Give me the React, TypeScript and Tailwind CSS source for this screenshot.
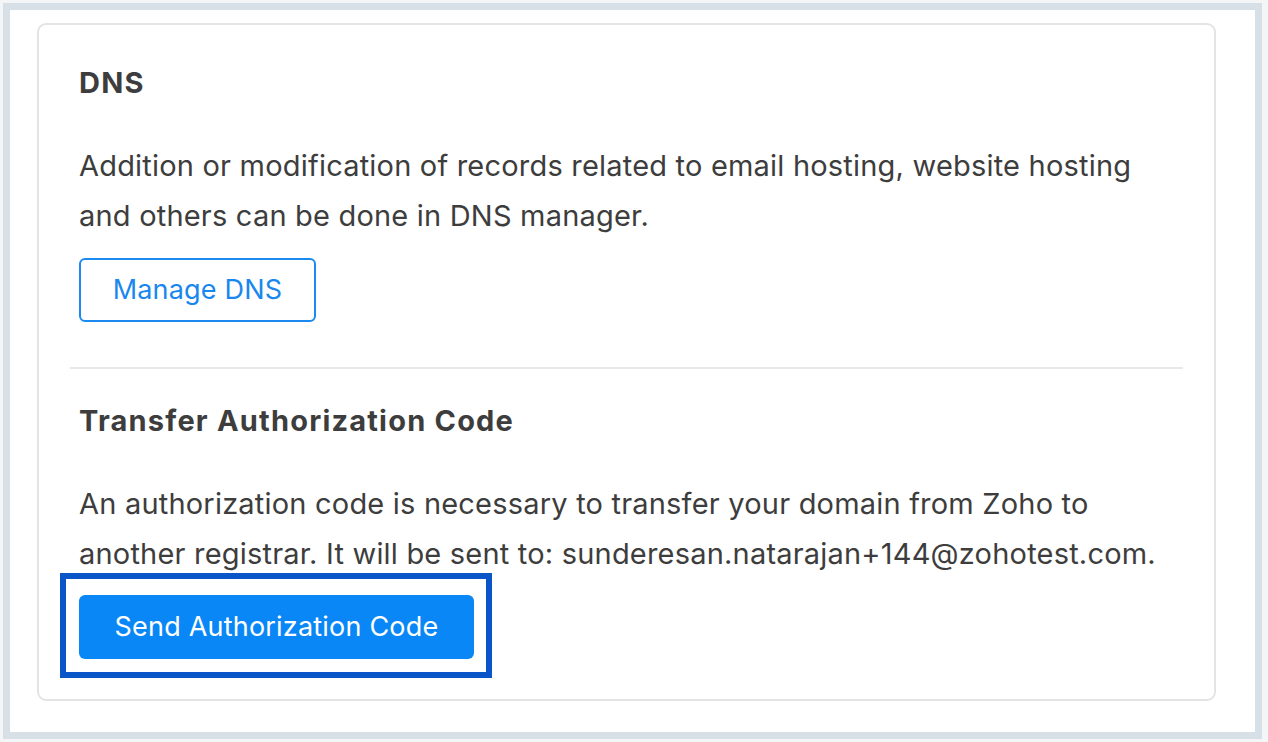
export default function App() {
  return (
    <div
      className="h-[742px] w-[1268px] bg-[#f3f5f7] p-[3px]"
      style={{ fontFamily: 'Inter, "Open Sans", sans-serif' }}
    >
      <div className="flex h-full w-[1259px] flex-col border-[7px] border-[#d7dfe7] bg-white pl-[27px] pt-[13px]">
        <div className="flex h-[678px] w-[1179px] flex-col rounded-[9px] border-2 border-[#e4e4e4] px-[40px] text-[#3d3d3d]">
          <h2 className="mt-[38px] text-[29px] font-bold leading-[40px] tracking-[1.2px]">DNS</h2>
          <p className="mt-[38px] text-[29px] leading-[50px] tracking-[0.2px]">
            Addition or modification of records related to email hosting, website hosting
            <br />
            and others can be done in DNS manager.
          </p>
          <div className="mt-[17px]">
            <button className="h-[64px] w-[237px] rounded-[6px] border-2 border-[#1a8af0] text-[27px] tracking-[0.2px] text-[#1a87ee]">
              Manage DNS
            </button>
          </div>
          <div className="-mx-[9px] mt-[45px] h-[2px] bg-[#e8e8e8]" />
          <h2 className="mt-[32px] text-[29px] font-bold leading-[40px] tracking-[1.2px]">Transfer Authorization Code</h2>
          <p className="mt-[38px] text-[29px] leading-[50px] tracking-[0.2px]">
            An authorization code is necessary to transfer your domain from Zoho to
            <br />
            another registrar. It will be sent to: sunderesan.natarajan+144@zohotest.com.
          </p>
          <div className="relative mt-[16px] self-start">
            <button className="h-[64px] w-[395px] rounded-[6px] bg-[#0a87f6] text-[27px] tracking-[0.2px] text-white">
              Send Authorization Code
            </button>
            <div className="pointer-events-none absolute -top-[22px] -bottom-[19px] -left-[19px] -right-[18px] border-[6px] border-[#0a56c8]" />
          </div>
        </div>
      </div>
    </div>
  );
}
